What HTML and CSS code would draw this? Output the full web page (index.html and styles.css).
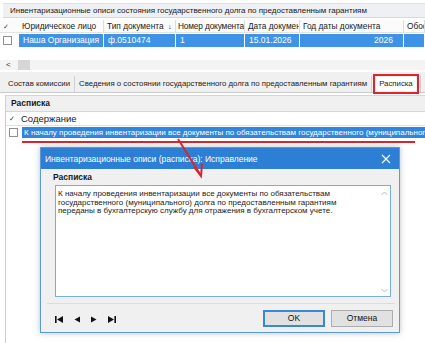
FILE: index.html
```html
<!DOCTYPE html>
<html lang="ru">
<head>
<meta charset="utf-8">
<link rel="stylesheet" href="styles.css">
</head>
<body>
<div class="screen">
  <div class="win">
    <div class="caption">Инвентаризационные описи состояния государственного долга по предоставленным гарантиям</div>
    <div class="grid">
      <div class="row head">
        <div class="c c0">✓</div>
        <div class="c c1">Юридическое лицо</div>
        <div class="c c2">Тип документа <span class="sort">↓</span></div>
        <div class="c c3">Номер документа</div>
        <div class="c c4">Дата документа</div>
        <div class="c c5">Год даты документа</div>
        <div class="c c6">Обоснование</div>
      </div>
      <div class="row data">
        <div class="c c0"><span class="cb"></span></div>
        <div class="c c1">Наша Организация</div>
        <div class="c c2">ф.0510474</div>
        <div class="c c3">1</div>
        <div class="c c4">15.01.2026</div>
        <div class="c c5 num">2026</div>
        <div class="c c6"></div>
      </div>
    </div>
    <div class="hscroll"><span class="larr">&lt;</span><span class="thumb"></span></div>
    <div class="tabs">
      <div class="tab">Состав комиссии</div>
      <div class="tab">Сведения о состоянии государственного долга по предоставленным гарантиям</div>
      <div class="tab active">Расписка</div>
      <div class="tab rest"></div>
    </div>
    <div class="panel">
      <div class="panel-title">Расписка</div>
      <div class="sub">
        <div class="srow shead"><span class="chk">✓</span><span>Содержание</span></div>
        <div class="srow ssel"><span class="cb"></span><span class="seltext">К началу проведения инвентаризации все документы по обязательствам государственного (муниципального) долга по предоставленным гарантиям</span></div>
        <div class="underline"></div>
      </div>
    </div>
  </div>

  <div class="dialog">
    <div class="dtitle">
      <span>Инвентаризационные описи (расписка): Исправление</span>
      <svg class="close" width="10" height="10" viewBox="0 0 10 10"><path d="M1 1 L9 9 M9 1 L1 9" stroke="#fff" stroke-width="1.2"/></svg>
    </div>
    <div class="dbody">
      <div class="group">
        <div class="glabel">Расписка</div>
        <div class="memo">
          <div class="memotext">К началу проведения инвентаризации все документы по обязательствам<br>государственного (муниципального) долга по предоставленным гарантиям<br>переданы в бухгалтерскую службу для отражения в бухгалтерском учете.</div>
          <div class="vscroll">
            <svg width="7" height="5" viewBox="0 0 7 5"><path d="M0.5 4 L3.5 1 L6.5 4" fill="none" stroke="#b9b9b9" stroke-width="1"/></svg>
            <svg width="7" height="5" viewBox="0 0 7 5"><path d="M0.5 1 L3.5 4 L6.5 1" fill="none" stroke="#b9b9b9" stroke-width="1"/></svg>
          </div>
        </div>
      </div>
      <div class="dfoot">
        <div class="nav">
          <svg width="8" height="7" viewBox="0 0 8 7"><rect x="0" y="0" width="1.6" height="7" fill="#111"/><path d="M8 0 L2 3.5 L8 7 Z" fill="#111"/></svg>
          <svg width="6" height="7" viewBox="0 0 6 7"><path d="M6 0.5 L0.5 3.5 L6 6.5 Z" fill="#111"/></svg>
          <svg width="6" height="7" viewBox="0 0 6 7"><path d="M0 0.5 L5.5 3.5 L0 6.5 Z" fill="#111"/></svg>
          <svg width="8" height="7" viewBox="0 0 8 7"><path d="M0 0 L6 3.5 L0 7 Z" fill="#111"/><rect x="6.4" y="0" width="1.6" height="7" fill="#111"/></svg>
        </div>
        <div class="btns">
          <div class="btn ok">OK</div>
          <div class="btn">Отмена</div>
        </div>
      </div>
    </div>
  </div>

  <svg class="arrow" width="40" height="50" viewBox="0 0 40 50">
    <path d="M4 2 L26 37" stroke="#d9262e" stroke-width="2" fill="none"/>
    <path d="M20 30 L27 39 L28 27" stroke="#d9262e" stroke-width="2" fill="none" stroke-linejoin="miter"/>
  </svg>
</div>
</body>
</html>
```

FILE: styles.css
```css
* { box-sizing: border-box; }
html, body { margin: 0; padding: 0; background: #fff; }
body { font-family: "Liberation Sans", Arial, sans-serif; color: #1a1a1a; }

.screen { position: relative; width: 425px; height: 343px; overflow: hidden; background: #fff; }

.win { padding-top: 3px; }

.caption {
  height: 15px; margin-left: 3px; padding-left: 7px;
  background: #eef0f3; border-top: 1px solid #dcdfe3; border-bottom: 1px solid #d5d8dc;
  font-size: 8px; line-height: 13px; white-space: nowrap; overflow: hidden;
}

.grid { margin-top: 2px; }
.row { display: flex; white-space: nowrap; }
.c { overflow: hidden; flex: none; padding-left: 3px; }
.c0 { width: 19px; padding-left: 3px; }
.c1 { width: 85px; }
.c2 { width: 72px; }
.c3 { width: 69px; }
.c4 { width: 55px; }
.c5 { width: 104px; }
.c6 { flex: 1; }

.head { height: 13px; font-size: 8.3px; line-height: 13px; background: #fbfbfb; border-bottom: 1px solid #e3e3e3; }
.head .c { border-right: 1px solid #dcdcdc; }
.head .c0 { font-size: 7px; color: #444; border-right: none; }
.head .c3 { padding-left: 2px; letter-spacing: -0.15px; }
.sort { font-size: 7.5px; margin-left: 2px; }

.data { height: 13px; margin-top: 1px; font-size: 8.5px; line-height: 13px; color: #fff; }
.data .c { background: #3e93e6; border-right: 1px solid #fff; padding-left: 4px; }
.data .c0 { background: #fff; border-right: none; display: flex; align-items: center; padding-left: 3px; }
.data .num { text-align: right; padding-right: 10px; }

.cb { display: inline-block; width: 9px; height: 9px; border: 1px solid #8f8f8f; background: #fff; }

.hscroll { margin-top: 13px; height: 10px; display: flex; align-items: center; background: #f4f4f4; padding-left: 6px; }
.larr { font-size: 8px; line-height: 10px; color: #333; width: 12px; }
.thumb { width: 12px; height: 10px; background: #d6d6d6; }

.tabs { margin-top: 2px; height: 21px; display: flex; align-items: flex-end; background: #f0f0f0; border-bottom: 1px solid #c9c9c9; padding-left: 4px; }
.tab { font-size: 7.8px; line-height: 16px; height: 16px; padding: 0 4px; white-space: nowrap; border-right: 1px solid #d0d0d0; color: #222; }
.tab.active { background: #fff; outline: 2px solid #e1232d; outline-offset: 1px; margin-left: 4px; margin-right: 4px; border: none; line-height: 14px; height: 14px; align-self: center; margin-top: 3px; padding: 0 3px; }
.tab.rest { width: 6px; border: none; border-left: 1px solid #ccc; }

.panel { margin-left: 5px; border-left: 1px solid #cfcfcf; height: 260px; }
.panel-title { height: 17px; margin-top: 2px; background: #f0f0f0; border-top: 1px solid #d6d6d6; border-bottom: 1px solid #d6d6d6; font-size: 8.5px; font-weight: bold; line-height: 15px; padding-left: 5px; }
.srow { display: flex; align-items: center; white-space: nowrap; overflow: hidden; }
.shead { height: 14px; font-size: 9.5px; border-bottom: 1px solid #e0e0e0; }
.chk { font-size: 7px; width: 15px; padding-left: 3px; color: #333; }
.ssel { height: 11px; margin-top: 1px; }
.ssel .cb { margin: 0 4px 0 3px; flex: none; }
.seltext { flex: 1; background: #2f86dc; color: #fff; font-size: 8px; line-height: 11px; padding-left: 2px; overflow: hidden; }
.underline { height: 2px; background: #d9262e; margin: 3px 10px 0 16px; }

.dialog {
  position: absolute; left: 40px; top: 147px; width: 360px; height: 186px;
  background: #f0f0f0; border: 1px solid #5b9bd5;
  box-shadow: 0 0 6px rgba(0,0,0,0.25);
  display: flex; flex-direction: column;
}
.dtitle { height: 21px; flex: none; background: #2d7fd6; color: #fff; font-size: 8.5px; display: flex; align-items: center; justify-content: space-between; padding: 0 8px 0 4px; }
.close { display: block; }
.dbody { flex: 1; display: flex; flex-direction: column; padding: 2px 4px 0 6px; }
.group { height: 133px; border-bottom: 1px solid #dcdcdc; padding: 0 4px 0 6px; }
.glabel { font-size: 8.5px; font-weight: bold; line-height: 12px; }
.memo { height: 112px; margin-left: 2px; margin-top: 2px; background: #fff; border: 1px solid #76aee0; display: flex; }
.memotext { flex: 1; font-size: 8px; line-height: 8.5px; padding: 4px 2px 0 2px; color: #222; white-space: nowrap; }
.vscroll { width: 12px; display: flex; flex-direction: column; justify-content: space-between; align-items: center; padding: 5px 0 3px; }
.vscroll svg { display: block; }

.dfoot { flex: 1; display: flex; align-items: center; justify-content: space-between; padding: 0 2px 0 8px; }
.nav { display: flex; gap: 11px; align-items: center; padding-top: 2px; }
.nav svg { display: block; }
.btns { display: flex; gap: 6px; padding-top: 1px; }
.btn { width: 62px; height: 17px; background: #e1e1e1; border: 1px solid #adadad; font-size: 8.5px; line-height: 15px; text-align: center; color: #111; }
.btn.ok { border: 2px solid #3a87d4; line-height: 13px; }

.arrow { position: absolute; left: 174px; top: 137px; }
```
